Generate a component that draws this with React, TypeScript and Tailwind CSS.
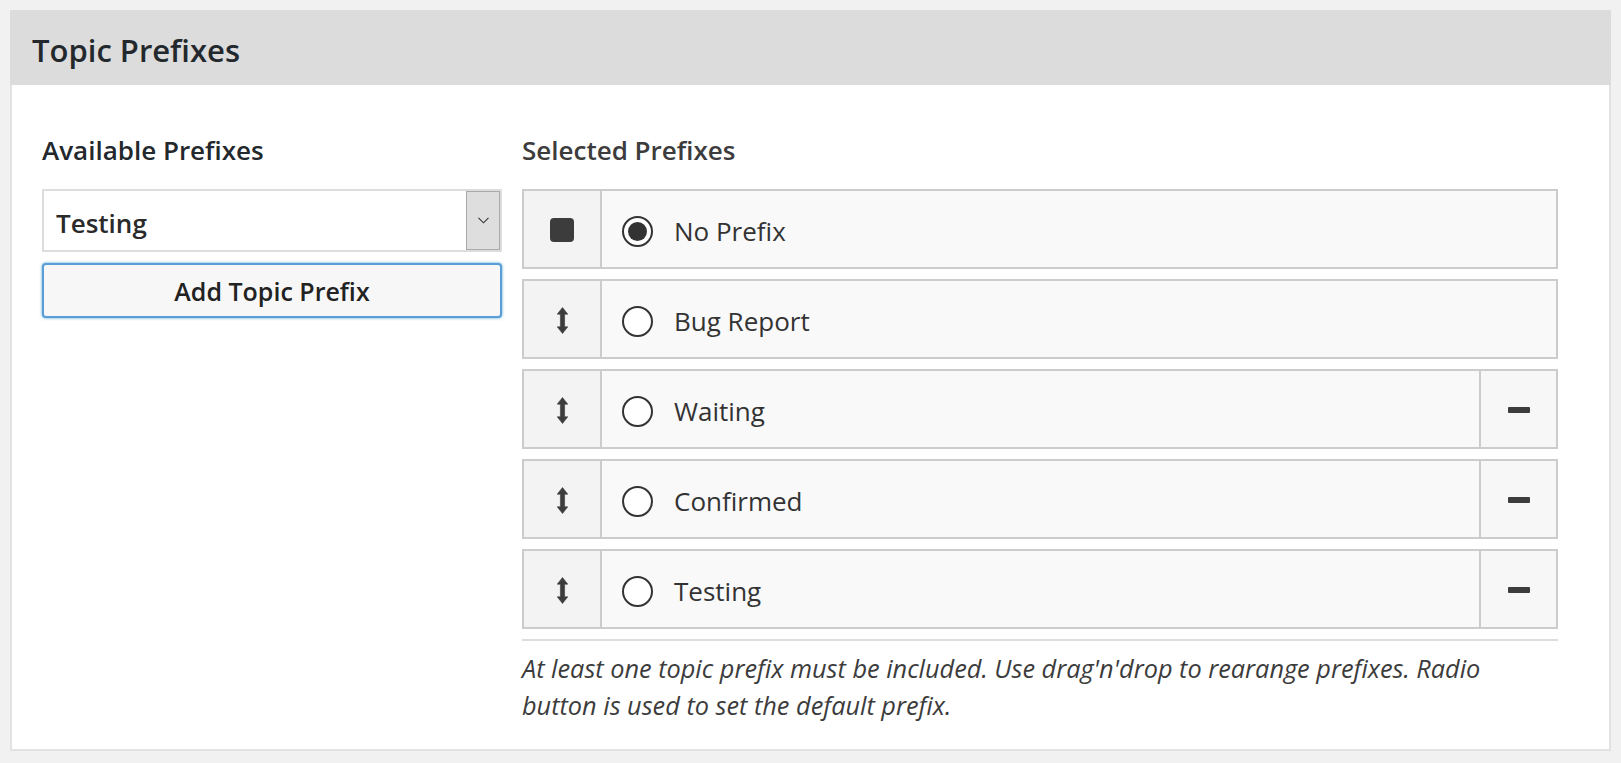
import React from "react";

const font = { fontFamily: '"Open Sans", "Noto Sans", sans-serif' };

function UpDown() {
  return (
    <svg width="11" height="27" viewBox="0 0 11 27" aria-hidden="true">
      <path
        d="M5.5 0.5 L10.8 7.2 L7.6 7.2 L7.6 19.8 L10.8 19.8 L5.5 26.5 L0.2 19.8 L3.4 19.8 L3.4 7.2 L0.2 7.2 Z"
        fill="#3c3c3c"
        stroke="#3c3c3c"
        strokeWidth="0.6"
        strokeLinejoin="round"
      />
    </svg>
  );
}

function Row({
  label,
  selected,
  fixed,
  removable,
}: {
  label: string;
  selected?: boolean;
  fixed?: boolean;
  removable?: boolean;
}) {
  return (
    <div className="flex h-[80px] border-2 border-[#cccccc] bg-[#f9f9f9]">
      <div className="flex w-[78px] shrink-0 items-center justify-center border-r-2 border-[#cccccc] bg-[#f3f3f3] pt-[2px]">
        {fixed ? (
          <div className="h-[24px] w-[24px] rounded-[4px] bg-[#3c3c3c]" />
        ) : (
          <UpDown />
        )}
      </div>
      <div className="flex flex-1 items-center pl-[20px] pt-[4px]">
        <div className="flex h-[31px] w-[31px] items-center justify-center rounded-full border-2 border-[#333333] bg-white">
          {selected && <div className="h-[19px] w-[19px] rounded-full bg-[#333333]" />}
        </div>
        <span className="ml-[21px] text-[26px] leading-none text-[#333333]">{label}</span>
      </div>
      {removable && (
        <div className="flex w-[77px] shrink-0 items-center justify-center border-l-2 border-[#cccccc] bg-[#f7f7f7] pt-[2px]">
          <div className="h-[6px] w-[22px] rounded-[1px] bg-[#3c3c3c]" />
        </div>
      )}
    </div>
  );
}

export default function App() {
  return (
    <div className="min-h-screen bg-[#f1f1f1] p-[10px]" style={font}>
      <div>
        <div className="flex h-[75px] items-center bg-[#dcdcdc] px-[22px] pt-[5px]">
          <h1 className="text-[31px] font-semibold leading-none text-[#23282d]">Topic Prefixes</h1>
        </div>
        <div className="border-x-2 border-b-2 border-[#e2e2e2] bg-white pb-[25px] pl-[30px] pr-[50px] pt-[46px]">
          <div className="grid grid-cols-[460px_1036px] gap-x-[20px]">
            <div>
              <h2 className="mb-[22px] h-[36px] pt-[1px] text-[26px] font-semibold leading-[36px] text-[#23282d]">
                Available Prefixes
              </h2>
              <div className="flex h-[63px] border-2 border-[#dddddd] bg-white">
                <div className="flex flex-1 items-center pl-[12px] pt-[5px] text-[26px] font-semibold text-[#2a2a2a]">
                  Testing
                </div>
                <div className="flex w-[34px] items-center justify-center border border-[#aaaaaa] bg-[#dedede]">
                  <svg width="11" height="7" viewBox="0 0 11 7" aria-hidden="true">
                    <path d="M0.5 0.8 L5.5 5.8 L10.5 0.8" fill="none" stroke="#333" strokeWidth="1.1" />
                  </svg>
                </div>
              </div>
              <button className="mt-[11px] flex h-[55px] w-full items-center justify-center rounded-[4px] border-2 border-[#5b9dd9] bg-[#f7f7f7] pt-[3px] text-[25px] font-semibold text-[#222222] shadow-[0_0_3px_rgba(30,140,190,0.8)]">
                Add Topic Prefix
              </button>
            </div>
            <div>
              <h2 className="mb-[22px] h-[36px] pt-[1px] text-[26px] font-semibold leading-[36px] text-[#3c3c3c]">
                Selected Prefixes
              </h2>
              <div className="flex flex-col gap-[10px]">
                <Row label="No Prefix" selected fixed />
                <Row label="Bug Report" />
                <Row label="Waiting" removable />
                <Row label="Confirmed" removable />
                <Row label="Testing" removable />
              </div>
              <div className="mt-[10px] h-[2px] bg-[#dddddd]" />
              <p className="mt-[9px] text-[25.3px] italic leading-[37px] text-[#3c3c3c]">
                At least one topic prefix must be included. Use drag'n'drop to rearange prefixes. Radio
                <br />
                button is used to set the default prefix.
              </p>
            </div>
          </div>
        </div>
      </div>
    </div>
  );
}
